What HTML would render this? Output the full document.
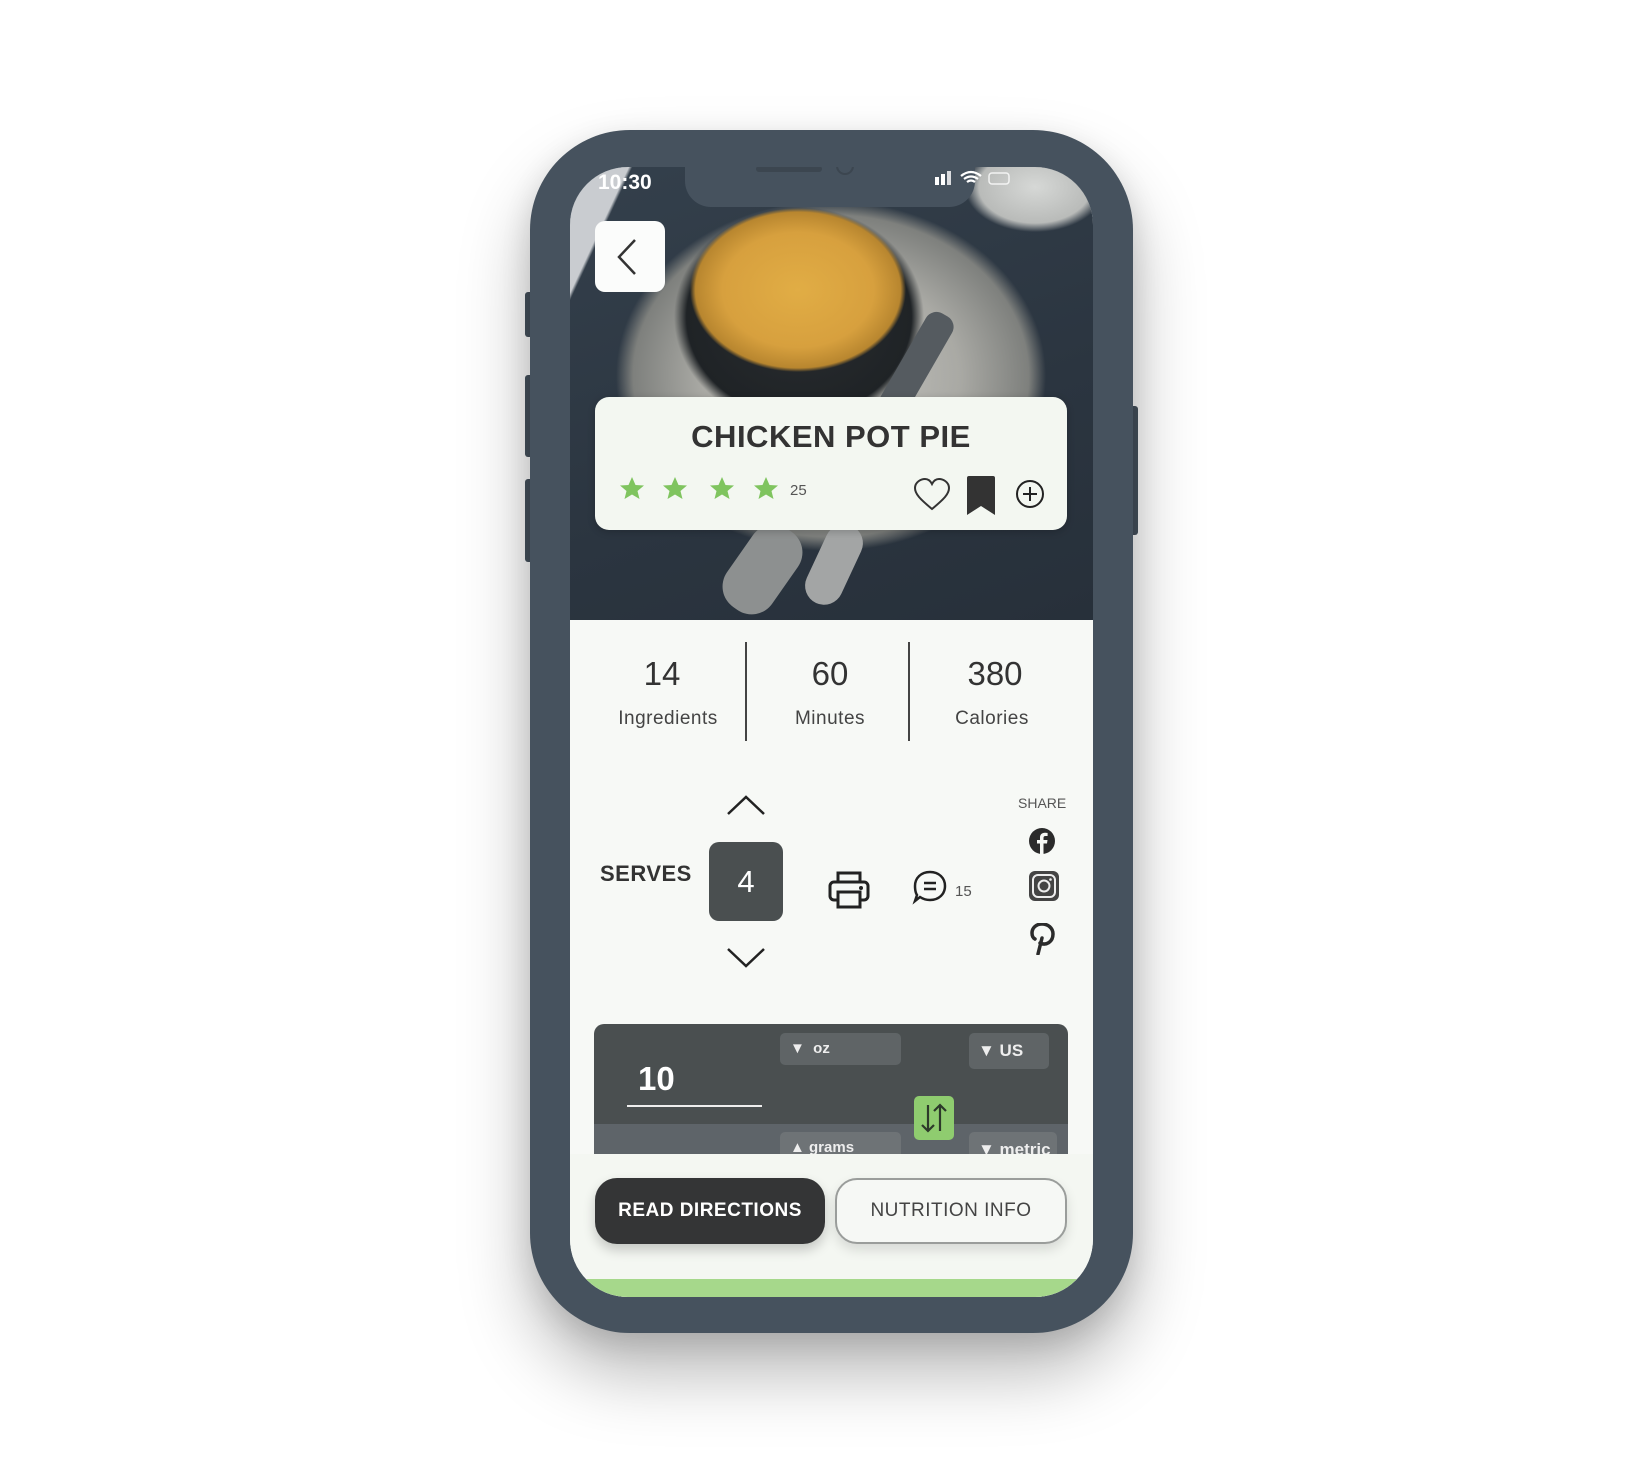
<!DOCTYPE html>
<html><head><meta charset="utf-8">
<style>
*{margin:0;padding:0;box-sizing:border-box}
body{width:1650px;height:1480px;background:#fff;position:relative;overflow:hidden;font-family:"Liberation Sans",sans-serif;color:#333}
.a{position:absolute}
.phone{left:530px;top:130px;width:603px;height:1203px;border-radius:100px;background:#46525e;box-shadow:0 40px 70px rgba(0,0,0,.28),0 10px 30px rgba(0,0,0,.12)}
.btn{background:#46525e;border-radius:3px}
.screen{left:570px;top:167px;width:523px;height:1130px;border-radius:58px;overflow:hidden;background:#f7f9f6}
.photo{left:0;top:0;width:523px;height:453px;background:
radial-gradient(ellipse 108px 82px at 228px 123px,#e1ad45 0,#d7a03e 70%,#b8862f 95%,transparent 100%),
radial-gradient(ellipse 125px 110px at 229px 150px,#2a2d30 0,#1f2326 90%,transparent 100%),
radial-gradient(ellipse 215px 175px at 261px 209px,#c6c6c2 0,#a9a9a4 60%,#7e807d 92%,transparent 100%),
radial-gradient(ellipse 70px 45px at 465px 20px,#d6d8d6 0,#b9bbb9 80%,transparent 100%),
linear-gradient(115deg,#c9ccd0 0,#c9ccd0 8%,transparent 8.5%),
linear-gradient(160deg,#34404c,#2b3540 60%,#27303a);}
.notch{left:115px;top:0;width:290px;height:40px;background:#46525e;border-radius:0 0 26px 26px}
.card{left:25px;top:230px;width:472px;height:133px;background:#f3f7f1;border-radius:14px;box-shadow:0 2px 8px rgba(0,0,0,.2)}
.num{font-size:33px;color:#333;text-align:center;width:140px}
.lab{font-size:19px;color:#444;text-align:center;width:160px;letter-spacing:.5px}
.dd{background:#5f6466;border-radius:5px;color:#eee;font-weight:bold}
</style></head><body>
<div class="a btn" style="left:525px;top:292px;width:8px;height:45px"></div>
<div class="a btn" style="left:525px;top:375px;width:8px;height:82px"></div>
<div class="a btn" style="left:525px;top:479px;width:8px;height:83px"></div>
<div class="a btn" style="left:1130px;top:406px;width:8px;height:129px"></div>
<div class="a phone"></div>
<div class="a screen">
  <div class="a photo">
    <div class="a" style="left:165px;top:355px;width:55px;height:95px;background:#8d9090;border-radius:25px;transform:rotate(35deg)"></div>
    <div class="a" style="left:245px;top:355px;width:38px;height:85px;background:#a3a5a5;border-radius:20px;transform:rotate(25deg)"></div>
    <div class="a" style="left:330px;top:140px;width:30px;height:120px;background:#555b60;border-radius:12px;transform:rotate(30deg)"></div>
  </div>
  <div class="a notch"></div>
  <div class="a" style="left:186px;top:-1px;width:66px;height:6px;border-radius:3px;background:#3c4650"></div>
  <div class="a" style="left:266px;top:-10px;width:18px;height:18px;border-radius:50%;border:2px solid #3c4650"></div>
  <div class="a" style="left:28px;top:4px;color:#fff;font-size:21px;font-weight:bold">10:30</div>
  <svg class="a" style="left:363px;top:0px" width="80" height="22" viewBox="0 0 80 22">
    <rect x="2" y="10" width="4" height="8" fill="#fff"/><rect x="8" y="7" width="4" height="11" fill="#fff"/><rect x="14" y="4" width="4" height="14" fill="#fff" opacity=".8"/>
    <path d="M28 9 Q38 1 48 9 M31 12 Q38 7 45 12 M34 15 Q38 12 42 15" stroke="#fff" stroke-width="2.2" fill="none"/>
    <rect x="56" y="6" width="20" height="11" rx="3" fill="none" stroke="#fff" stroke-width="1.5" opacity=".8"/>
  </svg>
  <div class="a" style="left:25px;top:54px;width:70px;height:71px;background:#fbfcfb;border-radius:10px"></div>
  <svg class="a" style="left:25px;top:54px" width="70" height="71"><path d="M40 19 L24 36 L40 53" stroke="#333" stroke-width="2.5" fill="none"/></svg>
  <div class="a card"></div>
  <div class="a" style="left:25px;top:252px;width:472px;text-align:center;font-size:31px;font-weight:bold;color:#333;letter-spacing:.5px">CHICKEN POT PIE</div>
  <svg class="a" style="left:40px;top:308px" width="440" height="52" viewBox="0 0 440 52">
    <g fill="#7fc45f">
      <path id="s" d="M22 0 L25.5 8 L34 8.5 L27.5 14 L29.5 22 L22 17.5 L14.5 22 L16.5 14 L10 8.5 L18.5 8 Z" transform="translate(0,2)"/>
      <use href="#s" x="43"/><use href="#s" x="90"/><use href="#s" x="134"/>
    </g>
    <text x="180" y="20" font-size="15" fill="#555" font-family="Liberation Sans">25</text>
    <path d="M322 30 C310 20 305 15 305 9 C305 3 311 0 315 0 C319 0 321 3 322 5 C323 3 325 0 329 0 C333 0 339 3 339 9 C339 15 334 20 322 30 Z" transform="translate(0,4)" fill="none" stroke="#333" stroke-width="2"/>
    <path d="M357 3 Q357 1 359 1 L383 1 Q385 1 385 3 L385 40 L371 31 L357 40 Z" fill="#333"/>
    <circle cx="420" cy="19" r="13" fill="none" stroke="#222" stroke-width="2"/>
    <path d="M420 12 V26 M413 19 H427" stroke="#222" stroke-width="2"/>
  </svg>
  <div class="a num" style="left:22px;top:488px">14</div>
  <div class="a lab" style="left:18px;top:541px">Ingredients</div>
  <div class="a" style="left:175px;top:475px;width:2px;height:99px;background:#444"></div>
  <div class="a num" style="left:190px;top:488px">60</div>
  <div class="a lab" style="left:180px;top:541px">Minutes</div>
  <div class="a" style="left:338px;top:475px;width:2px;height:99px;background:#444"></div>
  <div class="a num" style="left:355px;top:488px">380</div>
  <div class="a lab" style="left:342px;top:541px">Calories</div>
  <svg class="a" style="left:156px;top:628px" width="40" height="22"><path d="M2 19 L20 2 L38 19" stroke="#222" stroke-width="2.5" fill="none"/></svg>
  <svg class="a" style="left:156px;top:780px" width="40" height="22"><path d="M2 2 L20 19 L38 2" stroke="#222" stroke-width="2.5" fill="none"/></svg>
  <div class="a" style="left:30px;top:694px;font-size:22px;font-weight:bold;color:#333;letter-spacing:.5px">SERVES</div>
  <div class="a" style="left:139px;top:675px;width:74px;height:79px;background:#4a4f50;border-radius:10px;color:#fff;font-size:31px;text-align:center;line-height:79px">4</div>
  <svg class="a" style="left:258px;top:703px" width="42" height="40" viewBox="0 0 42 40">
    <path d="M10 12 V3 H32 V12" fill="none" stroke="#222" stroke-width="3"/>
    <rect x="2" y="12" width="38" height="18" rx="4" fill="none" stroke="#222" stroke-width="3"/>
    <rect x="10" y="22" width="22" height="15" fill="#f7f9f6" stroke="#222" stroke-width="3"/>
    <circle cx="33" cy="18" r="2" fill="#222"/>
  </svg>
  <svg class="a" style="left:342px;top:703px" width="36" height="36" viewBox="0 0 36 36">
    <path d="M18 2 C27 2 33 8 33 16 C33 24 27 30 18 30 C14 30 11 29 8 27 L3 31 L5 25 C3 22 3 19 3 16 C3 8 9 2 18 2 Z" fill="none" stroke="#222" stroke-width="2.5"/>
    <path d="M12 13 H24 M12 19 H24" stroke="#222" stroke-width="2.5"/>
  </svg>
  <div class="a" style="left:385px;top:716px;font-size:15px;color:#555">15</div>
  <div class="a" style="left:448px;top:628px;font-size:14px;color:#555">SHARE</div>
  <svg class="a" style="left:459px;top:661px" width="26" height="26" viewBox="0 0 26 26">
    <circle cx="13" cy="13" r="13" fill="#2b2b2b"/>
    <path d="M14.5 26 V15.5 H18 L18.5 12 H14.5 V9.8 C14.5 8.8 15 8 16.5 8 H18.6 V5 C18 5 17 4.8 15.8 4.8 C13 4.8 11 6.5 11 9.5 V12 H8 V15.5 H11 V26 Z" fill="#f7f9f6"/>
  </svg>
  <svg class="a" style="left:459px;top:704px" width="30" height="30" viewBox="0 0 30 30">
    <rect x="0" y="0" width="30" height="30" rx="6" fill="#444"/>
    <rect x="4" y="4" width="22" height="22" rx="5" fill="none" stroke="#eee" stroke-width="2"/>
    <circle cx="15" cy="15" r="5.5" fill="none" stroke="#eee" stroke-width="2"/>
    <circle cx="21.5" cy="8.5" r="1.3" fill="#eee"/>
  </svg>
  <svg class="a" style="left:460px;top:756px" width="26" height="32" viewBox="0 0 26 32">
    <path d="M8 31 L12 15 M10 20 C16 23 23 19 23 11 C23 5 18 1 12 1 C6 1 2 5 2 10 C2 13 3 15 5 16" fill="none" stroke="#2b2b2b" stroke-width="3.5" stroke-linecap="round"/>
  </svg>
  <div class="a" style="left:24px;top:857px;width:474px;height:130px;background:#4a4f50;border-radius:10px 10px 0 0;overflow:hidden">
    <div class="a" style="left:0;top:100px;width:474px;height:40px;background:#5e6469"></div>
    <div class="a dd" style="left:186px;top:9px;width:121px;height:32px;font-size:15px;line-height:32px;padding-left:10px">▼ &nbsp;oz</div>
    <div class="a dd" style="left:375px;top:9px;width:80px;height:36px;font-size:17px;line-height:36px;padding-left:9px">▼ US</div>
    <div class="a dd" style="left:186px;top:108px;width:121px;height:32px;font-size:15px;line-height:32px;padding-left:10px;background:#6e7376">▲ grams</div>
    <div class="a dd" style="left:375px;top:108px;width:88px;height:36px;font-size:17px;line-height:36px;padding-left:9px;background:#6e7376">▼ metric</div>
    <div class="a" style="left:44px;top:36px;color:#fff;font-size:33px;font-weight:bold">10</div>
    <div class="a" style="left:33px;top:81px;width:135px;height:2px;background:#eee"></div>
    <div class="a" style="left:320px;top:72px;width:40px;height:44px;background:#8fcc6f;border-radius:5px"></div>
    <svg class="a" style="left:320px;top:72px" width="40" height="44"><path d="M14 9 V35 M8 29 L14 35 L20 29 M26 35 V9 M20 15 L26 9 L32 15" stroke="#2d3a2a" stroke-width="2.2" fill="none"/></svg>
  </div>
  <div class="a" style="left:0;top:987px;width:523px;height:143px;background:#f4f7f2"></div>
  <div class="a" style="left:25px;top:1011px;width:230px;height:66px;background:#343536;border-radius:22px;color:#fff;font-weight:bold;font-size:19px;line-height:66px;text-align:center;letter-spacing:.5px;box-shadow:0 6px 12px rgba(0,0,0,.2)">READ DIRECTIONS</div>
  <div class="a" style="left:265px;top:1011px;width:232px;height:66px;background:#f6f8f5;border:2px solid #9a9d9b;border-radius:22px;color:#444;font-size:19px;line-height:62px;text-align:center;letter-spacing:.5px;box-shadow:0 6px 12px rgba(0,0,0,.12)">NUTRITION INFO</div>
  <div class="a" style="left:0;top:1112px;width:523px;height:18px;background:#a6d88b"></div>
</div>
</body></html>
